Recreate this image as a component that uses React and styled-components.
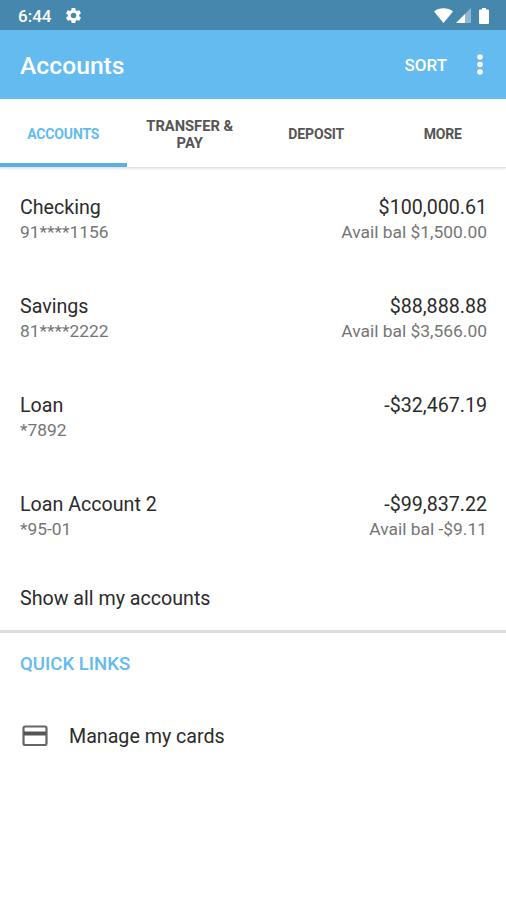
import styled, { createGlobalStyle, css } from "styled-components";
import { MdSettings } from "react-icons/md";

const GlobalStyle = createGlobalStyle`
  * {
    box-sizing: border-box;
  }
  body {
    margin: 0;
    background: #ffffff;
    font-family: Roboto, sans-serif;
  }
  p, h1, h2 {
    margin: 0;
  }
`;

const Screen = styled.div`
  width: 506px;
  height: 900px;
  overflow: hidden;
  background: #ffffff;
  color: #2b2b2b;
`;

const StatusBar = styled.div`
  height: 30px;
  display: flex;
  align-items: center;
  justify-content: space-between;
  padding: 1px 17px 0 18px;
  background: #4687ad;
  color: #ffffff;
`;

const StatusGroup = styled.div`
  display: flex;
  align-items: center;
  gap: 13px;
`;

const StatusIcons = styled.div`
  display: flex;
  align-items: center;

  & svg + svg {
    margin-left: 3px;
  }
  & svg:last-child {
    margin-left: 8px;
  }
`;

const Clock = styled.span`
  font-size: 17px;
  font-weight: 500;
  line-height: 20px;
`;

const AppBar = styled.header`
  height: 69px;
  display: flex;
  align-items: center;
  padding: 0 23px 0 20px;
  background: #63bbef;
  color: #ffffff;
`;

const Title = styled.h1`
  flex: 1;
  padding-top: 2px;
  font-size: 24.7px;
  font-weight: 500;
`;

const SortButton = styled.div`
  margin-right: 30px;
  font-size: 17px;
  font-weight: 500;
`;

const Tabs = styled.nav`
  height: 69px;
  display: grid;
  grid-template-columns: repeat(4, 1fr);
  border-bottom: 1px solid #e2e2e2;
  box-shadow: 0 1px 2px rgba(0, 0, 0, 0.1);
`;

const Tab = styled.div`
  display: flex;
  align-items: center;
  justify-content: center;
  padding-top: ${(p) => (p.$twoLines ? "8px" : "6px")};
  border-bottom: 4px solid transparent;
  color: #555555;
  font-size: ${(p) => (p.$twoLines ? "14.7px" : "14px")};
  font-weight: 700;
  letter-spacing: ${(p) => (p.$twoLines ? "0" : "-0.15px")};
  line-height: 17px;
  text-align: center;
  white-space: pre-line;
  ${(p) =>
    p.$active &&
    css`
      border-color: #5aafe3;
      color: #63bbef;
    `}
`;

const AccountRow = styled.div`
  height: 99px;
  display: flex;
  justify-content: space-between;
  padding: 26px 19px 0 20px;
`;

const AccountColumn = styled.div`
  text-align: ${(p) => p.$align || "left"};
`;

const Primary = styled.p`
  font-size: 19.65px;
  line-height: 28px;
`;

const Secondary = styled.p`
  color: #757575;
  font-size: 17.4px;
  line-height: 20px;
`;

const ShowAll = styled.div`
  height: 69px;
  padding: 22px 20px 0;
  border-bottom: 3px solid #dddddd;
  font-size: 19.65px;
  line-height: 26px;
`;

const SectionTitle = styled.h2`
  padding: 18px 20px 0;
  color: #63bbef;
  font-size: 18.6px;
  font-weight: 500;
  line-height: 26px;
`;

const QuickLink = styled.div`
  display: flex;
  align-items: center;
  gap: 21px;
  margin-top: 44px;
  padding: 0 22px;
  font-size: 19.65px;
  line-height: 32px;

  & svg {
    margin-bottom: 2px;
  }
`;

const WifiIcon = () => (
  <svg width="19" height="15" viewBox="0 0 19 15" fill="#fff">
    <path d="M0 3.5C5-.9 14-.9 19 3.5L9.5 15z" />
  </svg>
);

const SignalIcon = () => (
  <svg width="15" height="15" viewBox="0 0 15 15" fill="#fff">
    <path d="M15 0v15H0z" opacity="0.4" />
    <path d="M9 6v9H0z" />
  </svg>
);

const BatteryIcon = () => (
  <svg width="10" height="16" viewBox="0 0 10 16" fill="#fff">
    <path d="M3 0h4v1.5h2q1 0 1 1V15q0 1-1 1H1q-1 0-1-1V2.5q0-1 1-1h2z" />
  </svg>
);

const MenuIcon = () => (
  <svg width="6" height="22" viewBox="0 0 6 22" fill="#fff">
    <circle cx="3" cy="3" r="2.8" />
    <circle cx="3" cy="10.5" r="2.8" />
    <circle cx="3" cy="18" r="2.8" />
  </svg>
);

const CardIcon = () => (
  <svg width="26" height="22" viewBox="0 0 26 22" fill="none">
    <rect
      x="1.5"
      y="1.5"
      width="23"
      height="18.5"
      rx="1.8"
      stroke="#666666"
      strokeWidth="2.2"
    />
    <path d="M2 8.5h22" stroke="#555555" strokeWidth="4" />
  </svg>
);

const tabs = ["ACCOUNTS", "TRANSFER &\nPAY", "DEPOSIT", "MORE"];

const accounts = [
  {
    name: "Checking",
    number: "91****1156",
    balance: "$100,000.61",
    available: "Avail bal $1,500.00",
  },
  {
    name: "Savings",
    number: "81****2222",
    balance: "$88,888.88",
    available: "Avail bal $3,566.00",
  },
  { name: "Loan", number: "*7892", balance: "-$32,467.19" },
  {
    name: "Loan Account 2",
    number: "*95-01",
    balance: "-$99,837.22",
    available: "Avail bal -$9.11",
  },
];

const Account = ({ account }) => (
  <AccountRow>
    <AccountColumn>
      <Primary>{account.name}</Primary>
      <Secondary>{account.number}</Secondary>
    </AccountColumn>
    <AccountColumn $align="right">
      <Primary>{account.balance}</Primary>
      {account.available && <Secondary>{account.available}</Secondary>}
    </AccountColumn>
  </AccountRow>
);

export default function App() {
  return (
    <Screen>
      <GlobalStyle />
      <StatusBar>
        <StatusGroup>
          <Clock>6:44</Clock>
          <MdSettings size={19} />
        </StatusGroup>
        <StatusIcons>
          <WifiIcon />
          <SignalIcon />
          <BatteryIcon />
        </StatusIcons>
      </StatusBar>
      <AppBar>
        <Title>Accounts</Title>
        <SortButton>SORT</SortButton>
        <MenuIcon />
      </AppBar>
      <Tabs>
        {tabs.map((tab, i) => (
          <Tab key={tab} $active={i === 0} $twoLines={tab.includes("\n")}>
            {tab}
          </Tab>
        ))}
      </Tabs>
      {accounts.map((account) => (
        <Account key={account.name} account={account} />
      ))}
      <ShowAll>Show all my accounts</ShowAll>
      <SectionTitle>QUICK LINKS</SectionTitle>
      <QuickLink>
        <CardIcon />
        Manage my cards
      </QuickLink>
    </Screen>
  );
}
